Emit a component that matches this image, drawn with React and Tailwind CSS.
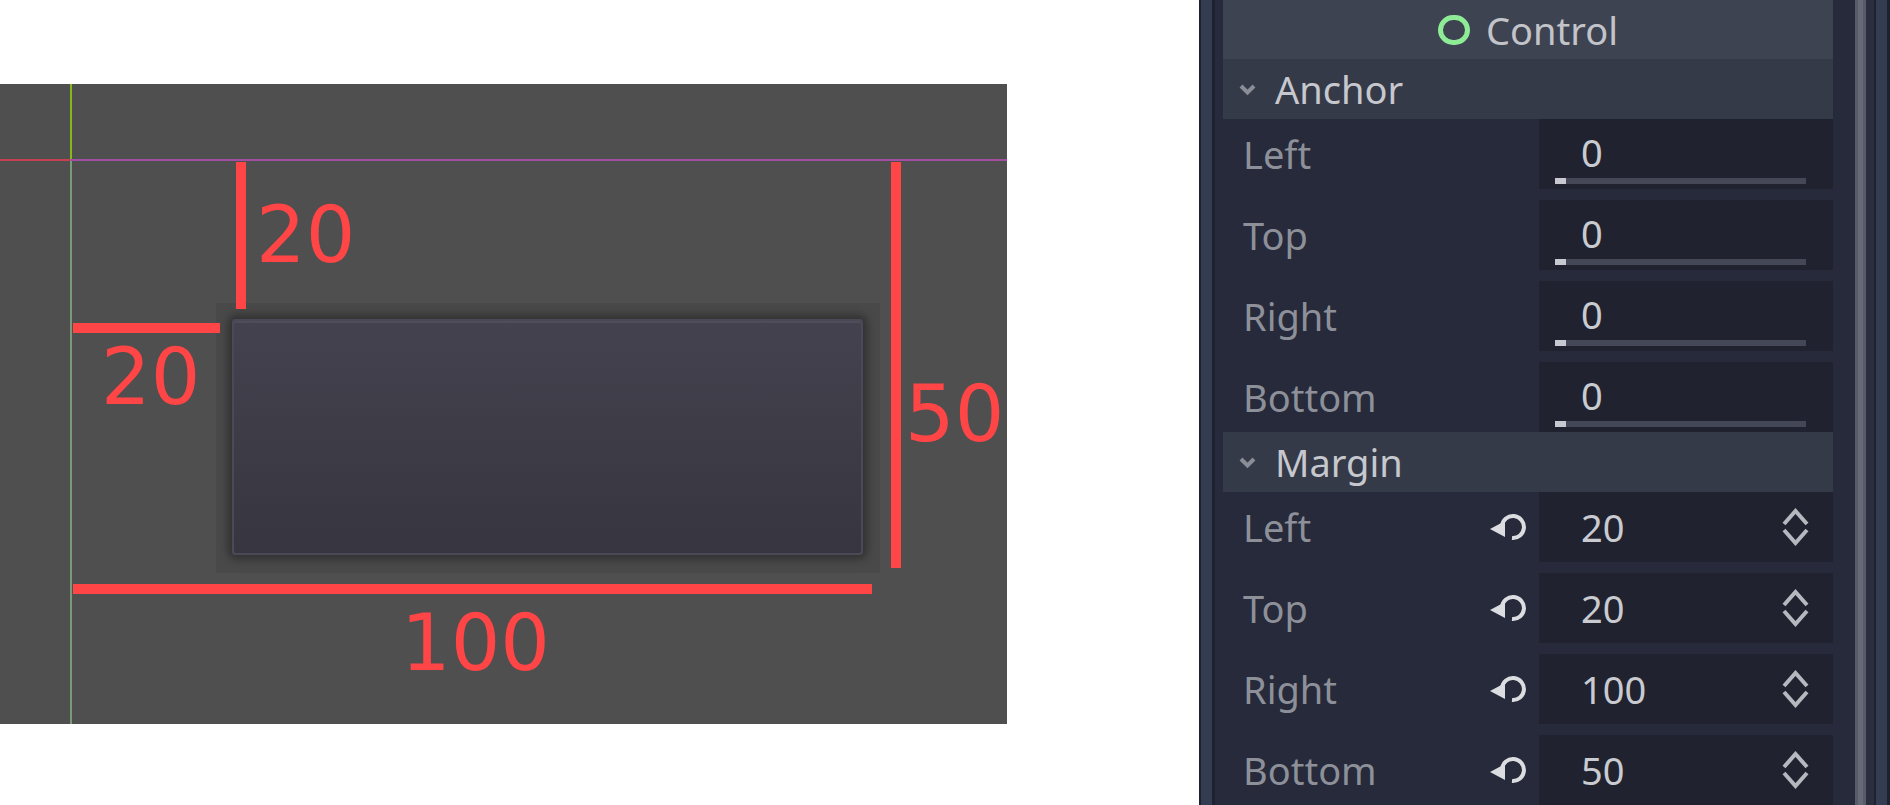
import React from 'react';

// Godot-style inspector next to a canvas showing a Control's margins

const ResetIcon = () => (
    <svg width="38" height="32" viewBox="0 0 38 32" fill="none">
        <path d="M12 15 A11 11 0 1 1 22 27" stroke="#dcdde1" strokeWidth="4" />
        <polygon points="0,18 15,10 15,26" fill="#dcdde1" />
    </svg>
);

const UpDownIcon = () => (
    <svg width="27" height="38" viewBox="0 0 27 38" fill="none">
        <polyline points="2,16 13.5,3 25,16" stroke="#b7b8bf" strokeWidth="4" />
        <polyline points="2,22 13.5,35 25,22" stroke="#b7b8bf" strokeWidth="4" />
    </svg>
);

const SectionHeader = ({ title }) => (
    <div className="h-[60px] bg-[#353a48] flex items-center pl-[14px] gap-[17px]">
        <svg width="21" height="13" viewBox="0 0 21 13" fill="none">
            <polyline points="4,3 10.5,9.5 17,3" stroke="#8a8d96" strokeWidth="4" />
        </svg>
        <span className="text-[38px] leading-none text-[#c6c8ce]">{title}</span>
    </div>
);

const AnchorRow = ({ label }) => (
    <div className="flex h-[70px]">
        <div className="w-[316px] flex items-center pl-[20px] text-[38px] leading-none text-[#8d9099]">
            {label}
        </div>
        <div className="flex-1 bg-[#20232f] flex flex-col pt-[14px] pl-[16px] pr-[27px]">
            <div className="h-[45px] pl-[26px] text-[38px] leading-none text-[#c9cbd1]">0</div>
            <div className="flex h-[6px]">
                <div className="w-[11px] bg-[#c8c9d0]" />
                <div className="flex-1 bg-[#434756]" />
            </div>
        </div>
    </div>
);

const MarginRow = ({ label, value }) => (
    <div className="flex h-[70px] shrink-0">
        <div className="w-[316px] flex items-center justify-between pl-[20px] pr-[11px] text-[38px] leading-none text-[#8d9099]">
            <span>{label}</span>
            <ResetIcon />
        </div>
        <div className="flex-1 bg-[#20232f] flex items-center justify-between pl-[42px] pr-[24px]">
            <span className="text-[38px] leading-none text-[#c9cbd1]">{value}</span>
            <UpDownIcon />
        </div>
    </div>
);

const Canvas = () => {
    const num = "absolute font-['DejaVu_Sans',sans-serif] text-[78px] leading-none text-[#ff4545]";
    return (
        <div className="relative w-[1007px] h-[640px] bg-[#4f4f4f] overflow-hidden">
            {/* guides */}
            <div className="absolute left-[70px] top-0 w-[2px] h-[75px] bg-[#86b81a]" />
            <div className="absolute left-[70px] top-[77px] w-[2px] h-[563px] bg-[#7a9b7a]" />
            <div className="absolute left-0 top-[75px] w-[70px] h-[2px] bg-[#c6404f]" />
            <div className="absolute left-[70px] top-[75px] w-[937px] h-[2px] bg-[#a14ea3]" />

            {/* control with its shadow */}
            <div className="absolute left-[216px] top-[219px] w-[664px] h-[270px] bg-[#494949] pl-[16px] pt-[16px]">
                <div className="w-[631px] h-[236px] rounded-[4px] border-2 border-[#4b4957] bg-[linear-gradient(180deg,#44424e,#37353f)] shadow-[0_0_9px_4px_rgba(0,0,0,0.35),inset_0_2px_0_rgba(255,255,255,0.06)]" />
            </div>

            {/* measurement bars */}
            <div className="absolute left-[236px] top-[78px] w-[10px] h-[147px] bg-[#ff4545]" />
            <div className="absolute left-[73px] top-[239px] w-[147px] h-[10px] bg-[#ff4545]" />
            <div className="absolute left-[891px] top-[78px] w-[10px] h-[406px] bg-[#ff4545]" />
            <div className="absolute left-[73px] top-[500px] w-[799px] h-[10px] bg-[#ff4545]" />

            <span className={`${num} left-[256px] top-[112px]`}>20</span>
            <span className={`${num} left-[101px] top-[254px]`}>20</span>
            <span className={`${num} left-[905px] top-[291px]`}>50</span>
            <span className={`${num} left-[401px] top-[520px]`}>100</span>
        </div>
    );
};

const Inspector = () => (
    <div className="flex h-[805px] w-[691px] shrink-0 bg-[#262a3a] font-['Noto_Sans',sans-serif]">
        <div className="w-[2px] bg-[#1e2230]" />
        <div className="w-[11px] bg-[#343c52]" />
        <div className="w-[3px] bg-[#1e2230]" />
        <div className="w-[8px]" />

        <div className="w-[610px] flex flex-col overflow-hidden">
            <div className="h-[59px] shrink-0 bg-[#3e4351] flex items-center justify-center gap-[16px]">
                <span className="w-[32px] h-[30px] rounded-full border-[5px] border-[#8eeb96]" />
                <span className="text-[38px] leading-none text-[#c2c4ca]">Control</span>
            </div>

            <SectionHeader title="Anchor" />
            <div className="flex flex-col gap-[11px]">
                <AnchorRow label="Left" />
                <AnchorRow label="Top" />
                <AnchorRow label="Right" />
                <AnchorRow label="Bottom" />
            </div>

            <SectionHeader title="Margin" />
            <div className="flex flex-col gap-[11px]">
                <MarginRow label="Left" value="20" />
                <MarginRow label="Top" value="20" />
                <MarginRow label="Right" value="100" />
                <MarginRow label="Bottom" value="50" />
            </div>
        </div>

        <div className="w-[22px]" />
        {/* scrollbar */}
        <div className="w-[3px] bg-[#575c6a]" />
        <div className="w-[5px] bg-[#666a78]" />
        <div className="w-[3px] bg-[#575c6a]" />
        <div className="w-[8px] bg-[#2a2e3e]" />
        <div className="w-[2px] bg-[#1e2230]" />
        <div className="w-[11px] bg-[#343c52]" />
        <div className="w-[3px] bg-[#1e2230]" />
    </div>
);

export default function App() {
    return (
        <div className="flex w-[1890px] h-[805px] bg-white overflow-hidden">
            <div className="w-[1199px] shrink-0 pt-[84px]">
                <Canvas />
            </div>
            <Inspector />
        </div>
    );
}
